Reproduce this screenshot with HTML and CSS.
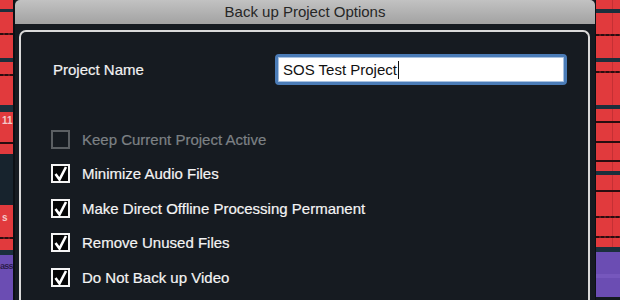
FILE: index.html
```html
<!DOCTYPE html>
<html lang="en">
<head>
<meta charset="utf-8">
<title>Back up Project Options</title>
<link rel="stylesheet" href="styles.css">
</head>
<body>
	<div class="screen">
		<div class="track track-left">
			<div class="red h9"></div>
			<div class="band h3"></div>
			<div class="red h21"></div>
			<div class="dots"></div>
			<div class="red h23"></div>
			<div class="band h4"></div>
			<div class="red h12"></div>
			<div class="dots"></div>
			<div class="red h29"></div>
			<div class="band h7"></div>
			<div class="red h30 tag">11</div>
			<div class="rule"></div>
			<div class="red h10"></div>
			<div class="navy h51"></div>
			<div class="red h32 tag tag-s">s</div>
			<div class="dots"></div>
			<div class="red h11"></div>
			<div class="band h5"></div>
			<div class="purple h45 tag tag-dark">ass</div>
		</div>

		<div class="dialog">
			<div class="titlebar">Back up Project Options</div>
			<div class="dialog-body">
				<div class="panel">
					<div class="name-row">
						<label class="name-label">Project Name</label>
						<div class="name-field">SOS Test Project<span class="caret"></span></div>
					</div>
					<ul class="options">
						<li class="option disabled"><span class="box"></span>Keep Current Project Active</li>
						<li class="option">
							<svg class="box" viewBox="0 0 19 19"><rect x="1" y="1" width="17" height="17"/><polyline points="4.5,10 8.5,15.5 15,3"/></svg>
							Minimize Audio Files
						</li>
						<li class="option">
							<svg class="box" viewBox="0 0 19 19"><rect x="1" y="1" width="17" height="17"/><polyline points="4.5,10 8.5,15.5 15,3"/></svg>
							Make Direct Offline Processing Permanent
						</li>
						<li class="option">
							<svg class="box" viewBox="0 0 19 19"><rect x="1" y="1" width="17" height="17"/><polyline points="4.5,10 8.5,15.5 15,3"/></svg>
							Remove Unused Files
						</li>
						<li class="option">
							<svg class="box" viewBox="0 0 19 19"><rect x="1" y="1" width="17" height="17"/><polyline points="4.5,10 8.5,15.5 15,3"/></svg>
							Do Not Back up Video
						</li>
					</ul>
				</div>
			</div>
		</div>

		<div class="track track-right">
			<div class="red h9"></div>
			<div class="band h4"></div>
			<div class="red h21"></div>
			<div class="dots"></div>
			<div class="red h22"></div>
			<div class="band h4"></div>
			<div class="red h9"></div>
			<div class="dots"></div>
			<div class="red h32"></div>
			<div class="band h4"></div>
			<div class="red h12"></div>
			<div class="rule"></div>
			<div class="red h18"></div>
			<div class="rule"></div>
			<div class="red h17"></div>
			<div class="rule"></div>
			<div class="red h9"></div>
			<div class="band h4"></div>
			<div class="red h15"></div>
			<div class="rule"></div>
			<div class="red h24"></div>
			<div class="dots"></div>
			<div class="red h18"></div>
			<div class="dots"></div>
			<div class="red h9"></div>
			<div class="band h5"></div>
			<div class="purple h45"></div>
		</div>
	</div>
</body>
</html>
```

FILE: styles.css
```css
* { margin: 0; padding: 0; box-sizing: border-box; }
body { background: #141a20; font-family: "Liberation Sans", Arial, sans-serif; }

.screen { display: flex; width: 620px; height: 300px; overflow: hidden; }

/* arrange window behind the dialog */
.track { display: flex; flex-direction: column; height: 300px; }
.track-left { width: 15px; border-right: 2px solid #0c1015; }
.track-right { width: 25px; border-left: 1px solid #0c1015; }
.red { background: #e13a3d; }
.track-right .red { background: linear-gradient(to right, #e13a3d 0 16px, #c53034 16px 17px, #e13a3d 17px); }
.band { background: #1b2f3c; }
.navy { background: #17232d; }
.purple { background: #6b4db3; }
.track-right .purple { background: linear-gradient(to bottom, #6b4db3 0 22px, #7657bd 22px 26px, #6b4db3 26px); }
.rule { height: 2px; background: #2a0d10; }
.dots { height: 2px; background: repeating-linear-gradient(to right, #2a0d10 0 3px, #5a1519 3px 5px); }
.tag { font-size: 10px; font-weight: bold; color: #f4c9c9; padding: 4px 0 0 2px; line-height: 10px; overflow: hidden; white-space: nowrap; }
.tag-s { padding: 8px 0 0 2px; }
.tag-dark { color: #2c1c4c; padding: 6px 0 0 0; font-size: 9px; letter-spacing: -0.8px; }
.h3 { height: 3px; } .h4 { height: 4px; } .h5 { height: 5px; } .h7 { height: 7px; }
.h9 { height: 9px; } .h10 { height: 10px; } .h11 { height: 11px; } .h12 { height: 12px; }
.h15 { height: 15px; } .h17 { height: 17px; } .h18 { height: 18px; } .h21 { height: 21px; }
.h22 { height: 22px; } .h23 { height: 23px; } .h24 { height: 24px; } .h29 { height: 29px; }
.h30 { height: 30px; } .h32 { height: 32px; } .h45 { height: 45px; } .h51 { height: 51px; }

/* dialog */
.dialog { width: 580px; display: flex; flex-direction: column; background: #161b21; }
.titlebar { height: 24px; line-height: 24px; text-align: center; font-size: 15px; color: #262626;
	background: linear-gradient(#c2c2c2, #a2a2a2); border-radius: 5px 5px 0 0; }
.dialog-body { flex: 1; display: flex; padding: 6px 5px 0 4px; }
.panel { flex: 1; border: 2px solid #dadada; border-bottom: none; border-radius: 7px 7px 0 0; }

.name-row { display: flex; align-items: center; margin-top: 22px; padding-left: 32px; }
.name-label { width: 222px; font-size: 15px; color: #f2f2f2; -webkit-text-stroke: 0.2px #f2f2f2; }
.name-field { width: 292px; height: 31px; display: flex; align-items: center; padding-left: 5px;
	background: #fff; border: 3px solid #4b7cb7; border-radius: 4px; box-shadow: inset 0 0 0 1px #a9c2e0;
	font-size: 15px; color: #111; }
.caret { width: 1px; height: 18px; margin-left: 1px; background: #111; }

.options { list-style: none; margin-top: 37px; padding-left: 30px; }
.option { height: 34.5px; display: flex; align-items: center; gap: 12px; font-size: 15px;
	color: #f4f4f4; -webkit-text-stroke: 0.2px #f4f4f4; }
.box { width: 19px; height: 19px; flex: 0 0 19px; }
svg.box rect { fill: #050607; stroke: #f4f4f4; stroke-width: 2; }
svg.box polyline { fill: none; stroke: #fff; stroke-width: 2.6; }
.option.disabled { color: #7d8185; -webkit-text-stroke: 0.2px #7d8185; }
.option.disabled .box { border: 2px solid #5b5f63; }
```
